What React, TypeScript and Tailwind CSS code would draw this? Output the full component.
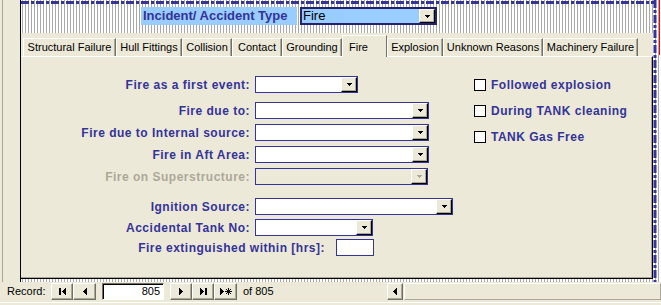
import React from "react";

const stipple =
  "bg-white bg-[radial-gradient(#a9a9a9_0.75px,transparent_0.85px)] bg-[length:3px_2px]";

function Arrow({ color = "#000" }: { color?: string }) {
  return (
    <svg width="5" height="3" viewBox="0 0 5 3">
      <path d="M0 0H5V1H4V2H3V3H2V2H1V1H0Z" fill={color} />
    </svg>
  );
}

function DropBtn({ disabled }: { disabled?: boolean }) {
  return (
    <div className="flex h-full w-[16px] items-center justify-center border-t border-l border-r border-b border-t-white border-l-white border-r-black border-b-black bg-[#ECE9D8] shadow-[inset_-1px_-1px_0_#ACA899]">
      <Arrow color={disabled ? "#ACA899" : "#000"} />
    </div>
  );
}

function Combo({ className = "", disabled }: { className?: string; disabled?: boolean }) {
  return (
    <div
      className={`flex h-[17px] justify-end border border-[#333399] ${
        disabled ? "bg-[#ECE9D8]" : "bg-white"
      } ${className}`}
    >
      <DropBtn disabled={disabled} />
    </div>
  );
}

function Row({
  label,
  children,
  disabled,
  className = "",
}: {
  label: string;
  children: React.ReactNode;
  disabled?: boolean;
  className?: string;
}) {
  return (
    <div className={`flex h-[17px] items-center ${className}`}>
      <span
        className={`w-[229px] shrink-0 text-right text-[12px] font-bold tracking-[0.5px] ${
          disabled ? "text-[#ACA899]" : "text-[#333399]"
        }`}
      >
        {label}
      </span>
      <div className="ml-[5px]">{children}</div>
    </div>
  );
}

function Check({ label }: { label: string }) {
  return (
    <div className="flex h-[17px] items-center">
      <div className="h-[12px] w-[12px] border border-black bg-white" />
      <span className="ml-[5px] text-[12px] font-bold tracking-[0.5px] text-[#333399]">{label}</span>
    </div>
  );
}

const tabs: { name: string; w: string; active?: boolean }[] = [
  { name: "Structural Failure", w: "w-[93px]" },
  { name: "Hull Fittings", w: "w-[66px]" },
  { name: "Collision", w: "w-[50px]" },
  { name: "Contact", w: "w-[50px]" },
  { name: "Grounding", w: "w-[60px]" },
  { name: "Fire", w: "w-[45px]", active: true },
  { name: "Explosion", w: "w-[56px]" },
  { name: "Unknown Reasons", w: "w-[100px]" },
  { name: "Machinery Failure", w: "w-[95px]" },
];

function NavBtn({ children, className = "" }: { children: React.ReactNode; className?: string }) {
  return (
    <div
      className={`flex h-[17px] items-center justify-center border border-t-white border-l-white border-r-[#716F64] border-b-[#716F64] bg-[#ECE9D8] shadow-[inset_-1px_-1px_0_#ACA899] ${className}`}
    >
      {children}
    </div>
  );
}

const triLeft = "M3 0h1v7h-1z M2 1h1v5h-1z M1 2h1v3h-1z M0 3h1v1h-1z";
const triRight = "M0 0h1v7h-1z M1 1h1v5h-1z M2 2h1v3h-1z M3 3h1v1h-1z";

export default function App() {
  return (
    <div className="relative flex h-[305px] w-[661px] flex-col overflow-hidden bg-[#ECE9D8] font-['Liberation_Sans',Arial,sans-serif]">
      <div className="flex h-[282px]">
        {/* record selector strip */}
        <div className="w-[20px] pl-[2px]">
          <div className="h-full border-l border-[#ACA899]" />
        </div>

        {/* form detail */}
        <div className={`flex flex-1 flex-col border-l border-black pt-[7px] ${stipple}`}>
          <div className="flex h-[18px]">
            <div className="ml-[120px] flex w-[156px] items-center bg-[#99CCFF] pl-[2px] text-[13px] font-bold text-[#333399]">
              Incident/ Accident Type
            </div>
            <div className="ml-[3px] flex w-[137px] border-2 border-[#22226E] bg-[#99CCFF]">
              <span className="flex-1 pl-[1px] text-[13px] leading-[14px] text-black">Fire</span>
              <DropBtn />
            </div>
          </div>

          {/* tab control */}
          <div className="mt-[8px] flex h-[246px] w-[632px] flex-col bg-[#ECE9D8]">
            <div className="flex h-[23px] items-end pl-[2px]">
              {tabs.map((t) =>
                t.active ? (
                  <div
                    key={t.name}
                    className={`relative z-10 -mb-px flex h-[22px] ${t.w} justify-start border-t border-l border-r border-t-white border-l-white border-r-[#716F64] bg-[#ECE9D8] pt-[3px] pl-[6px] text-[11px] text-black`}
                  >
                    {t.name}
                  </div>
                ) : (
                  <div
                    key={t.name}
                    className={`flex h-[18px] ${t.w} items-center justify-center border-t border-l border-r border-t-white border-l-white border-r-[#716F64] shadow-[inset_-1px_0_0_#ACA899] text-[11px] text-black`}
                  >
                    {t.name}
                  </div>
                )
              )}
            </div>

            <div className="flex flex-1 border-t border-r border-b border-t-white border-r-black border-b-black shadow-[inset_-1px_-1px_0_#ACA899]">
              <div className="flex w-[432px] flex-col pt-[19px]">
                <Row label="Fire as a first event:">
                  <Combo className="w-[103px]" />
                </Row>
                <Row label="Fire due to:" className="mt-[9px]">
                  <Combo className="w-[174px]" />
                </Row>
                <Row label="Fire due to Internal source:" className="mt-[5px]">
                  <Combo className="w-[174px]" />
                </Row>
                <Row label="Fire in Aft Area:" className="mt-[5px]">
                  <Combo className="w-[174px]" />
                </Row>
                <Row label="Fire on Superstructure:" disabled className="mt-[5px]">
                  <Combo className="w-[173px]" disabled />
                </Row>
                <Row label="Ignition Source:" className="mt-[13px]">
                  <Combo className="w-[198px]" />
                </Row>
                <Row label="Accidental Tank No:" className="mt-[4px]">
                  <Combo className="w-[118px]" />
                </Row>
                <div className="mt-[3px] flex h-[17px] items-center">
                  <span className="w-[304px] text-right text-[12px] font-bold tracking-[0.5px] text-[#333399]">
                    Fire extinguished within [hrs]:
                  </span>
                  <div className="ml-[11px] h-[17px] w-[38px] border border-[#333399] bg-white" />
                </div>
              </div>
              <div className="flex flex-col gap-[9px] pt-[19px] pl-[21px]">
                <Check label="Followed explosion" />
                <Check label="During TANK cleaning" />
                <Check label="TANK Gas Free" />
              </div>
            </div>
          </div>
        </div>
      </div>

      {/* record navigation */}
      <div className="flex h-[19px] items-center pl-[7px] text-[11px] text-black">
        <span className="w-[44px]">Record:</span>
        <NavBtn className="w-[22px]">
          <svg width="7" height="7" viewBox="0 0 7 7">
            <path d="M0 0h2v7h-2z" fill="#000" />
            <path d={triLeft} transform="translate(3 0)" fill="#000" />
          </svg>
        </NavBtn>
        <NavBtn className="w-[23px]">
          <svg width="4" height="7" viewBox="0 0 4 7">
            <path d={triLeft} fill="#000" />
          </svg>
        </NavBtn>
        <div className="ml-[6px] flex h-[17px] w-[62px] items-center justify-end border border-t-[#716F64] border-l-[#716F64] border-r-white border-b-white bg-white pr-[3px] shadow-[inset_1px_1px_0_#000]">
          805
        </div>
        <NavBtn className="ml-[6px] w-[22px]">
          <svg width="4" height="7" viewBox="0 0 4 7">
            <path d={triRight} fill="#000" />
          </svg>
        </NavBtn>
        <NavBtn className="w-[22px]">
          <svg width="7" height="7" viewBox="0 0 7 7">
            <path d={triRight} fill="#000" />
            <path d="M5 0h2v7h-2z" fill="#000" />
          </svg>
        </NavBtn>
        <NavBtn className="w-[23px]">
          <svg width="12" height="7" viewBox="0 0 12 7">
            <path d={triRight} fill="#000" />
            <path d="M8.5 0v7M5 3.5h7M6 1l5 5M11 1l-5 5" stroke="#000" strokeWidth="1" />
          </svg>
        </NavBtn>
        <span className="ml-[6px]">of 805</span>

        {/* horizontal scroll bar */}
        <div className="ml-auto flex h-[17px] w-[274px]">
          <NavBtn className="h-[17px] w-[16px]">
            <svg width="4" height="7" viewBox="0 0 4 7">
              <path d={triLeft} fill="#000" />
            </svg>
          </NavBtn>
          <div className="ml-[1px] flex-1 border border-t-white border-l-white border-r-[#ACA899] border-b-[#ACA899] bg-[#ECE9D8]" />
        </div>
      </div>
      <div className="mt-[1px] border-t border-white" />

      {/* selection outline of the detail section */}
      <svg className="pointer-events-none absolute left-0 top-0" width="661" height="282">
        <line x1="21" y1="2.5" x2="656" y2="2.5" stroke="#333399" strokeWidth="3" strokeDasharray="8 2 3 2" />
        <line x1="655" y1="0" x2="655" y2="282" stroke="#333399" strokeWidth="3" strokeDasharray="8 2 3 2" />
        <line x1="659.5" y1="0" x2="659.5" y2="55" stroke="#ff0000" strokeWidth="1" />
      </svg>
    </div>
  );
}
